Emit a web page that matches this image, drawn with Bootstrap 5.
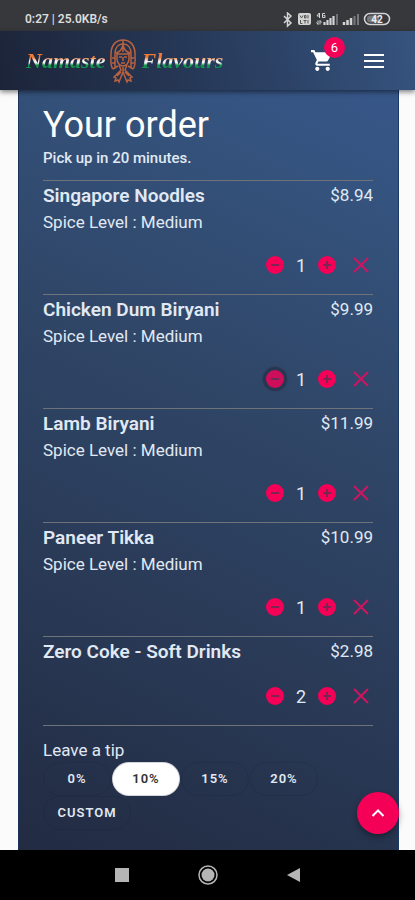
<!DOCTYPE html>
<html lang="en">
<head>
<meta charset="utf-8">
<meta name="viewport" content="width=device-width, initial-scale=1">
<title>Namaste Flavours - Your order</title>
<link href="https://cdn.jsdelivr.net/npm/bootstrap@5.3.0/dist/css/bootstrap.min.css" rel="stylesheet">
<style>
  body { font-family: Roboto, "Liberation Sans", sans-serif; background: #fbfbfb; color: #e0e9f3; }
  svg { display: block; }
  .statusbar { height: 31px; background: #37383c; color: #dcdcdc; font-size: 12px; font-weight: 600; padding: 12px 24px 0 25px; }
  .topbar { height: 59px; padding: 0 30px 0 26px; background: linear-gradient(75deg, #1c2438 0%, #263857 45%, #36547f 100%); box-shadow: 0 2px 5px rgba(0,0,0,.5); z-index: 2; }
  .brand-word { font: italic 700 22px/30px "Liberation Serif", serif; color: transparent; background: linear-gradient(#f07a35 38%, #f4f4f4 50%, #f4f4f4 56%, #12954d 64%); -webkit-background-clip: text; background-clip: text; }
  .icon-btn { border: 0; background: none; padding: 0; color: #fff; line-height: 1; }
  .cart-count { left: 14px; top: -11px; width: 21px; height: 21px; font-size: 13px; line-height: 21px; background: #f50057; color: #fff; }
  .order-panel { margin: 0 16px 0 18px; padding: 14px 25px 16px 24px; background: linear-gradient(205deg, #37578a 0%, #34527c 15%, #304769 38%, #2a3b58 66%, #222b42 100%); border-right: 1px solid #1b3a68; border-left: 1px solid #1b3358; }
  .order-title { font-size: 36px; line-height: 42px; font-weight: 400; color: #fff; }
  .pickup { font-size: 15px; line-height: 24px; font-weight: 500; margin-bottom: 10px; }
  .order-item { border-top: 1px solid #6e7379; padding-top: 1px; }
  .order-list { border-bottom: 1px solid #6e7379; margin-bottom: 12px; }
  .item-line { font-size: 17px; line-height: 27px; }
  .order-item:last-child .item-line { min-height: 29px; }
  .item-name { font-weight: 600; font-size: 19px; line-height: 27px; }
  .controls { height: 58px; gap: 2px; font-size: 18px; }
  .qty { width: 24px; }
  .ctl { width: 24px; height: 24px; border: 0; padding: 2px; background: none; border-radius: 50%; color: #f50057; }
  .ctl-on { background: #27334b; opacity: .8; box-shadow: 0 0 2px #27334b; }
  .ctl-x { color: #cf1460; }
  .tip-label { font-size: 17px; line-height: 24px; }
  .tips { column-gap: 1px; }
  .tip { width: 68px; height: 34px; padding: 0; border: 1px solid rgba(20,30,55,.18); border-radius: 17px; background: none; color: #e0e9f3; font-size: 13px; font-weight: 600; letter-spacing: 1px; }
  .tip-on { background: #fff; color: #333; }
  .tip-custom { width: 88px; }
  .to-top { right: 16px; bottom: 16px; width: 42px; height: 42px; border: 0; padding: 0; border-radius: 50%; background: #f50057; box-shadow: 0 3px 6px rgba(0,0,0,.35); }
  .sysnav { height: 50px; background: #000; padding: 0 79px; }
  .sysnav button { width: 86px; }
</style>
<script src="https://cdn.jsdelivr.net/npm/bootstrap@5.3.0/dist/js/bootstrap.bundle.min.js"></script>
</head>
<body>
<svg width="0" height="0" class="position-absolute" aria-hidden="true">
  <symbol id="minus" viewBox="0 0 20 20"><circle cx="10" cy="10" r="9" fill="currentColor"/><path d="M6 10h8" stroke="#7d2452" stroke-width="2"/></symbol>
  <symbol id="plus" viewBox="0 0 20 20"><circle cx="10" cy="10" r="9" fill="currentColor"/><path d="M6 10h8M10 6v8" stroke="#7d2452" stroke-width="2"/></symbol>
  <symbol id="cross" viewBox="0 0 20 20"><path d="M3 3l14 14M17 3L3 17" stroke="currentColor" stroke-width="2"/></symbol>
</svg>
<div class="d-flex flex-column min-vh-100">
  <div class="statusbar d-flex justify-content-between align-items-start lh-sm">
    <span>0:27 | 25.0KB/s</span>
    <svg width="108" height="16" viewBox="0 0 108 16" fill="none" stroke="#d4d4d4">
      <path d="M1 4l7 7-3.500 3V1L8 4l-7 7" stroke-width="1.500"/>
      <rect x="15" y="1" width="13" height="12" rx="2" fill="#d4d4d4" stroke="none"/>
      <path d="M17 3.500l1.500 2.500L20 3.500M21.500 3.500h1.500v2.500h-1.500zM25 3v3.500M17.500 8v3.500h2M20.500 8.500h3M22 8.500v3M25 8v3.500" stroke="#555" stroke-width="1"/>
      <path d="M36 1l-2 3h3M36.500 1v5M42 1.500h-2.500v4H42V3.500h-1.500M35 8.500v4l-1.500-2M37 12.500v-4l1.500 2" stroke-width="1"/>
      <path d="M41.500 13v-3M44.500 13V8M47.500 13V6M50.500 13V4" stroke-width="2.200"/>
      <path d="M54 13V2" stroke="#707174" stroke-width="2"/>
      <path d="M61 13v-3M64.500 13V8M68 13V6" stroke-width="2.500"/>
      <path d="M71.500 13V4M75 13V2" stroke="#77787a" stroke-width="2"/>
      <rect x="81.500" y="1.500" width="25" height="11" rx="5.500" stroke-width="1.500"/>
      <rect x="84" y="3.500" width="12" height="7" rx="3" fill="#77787a" stroke="none"/>
      <text x="94" y="11" text-anchor="middle" font-size="10" font-weight="700" fill="#eee" stroke="none">42</text>
    </svg>
  </div>

  <nav class="topbar d-flex align-items-center justify-content-between position-relative">
    <a href="#" class="d-flex align-items-center text-decoration-none gap-1" aria-label="Namaste Flavours home">
      <span class="brand-word">Namaste</span>
      <svg width="28" height="46" viewBox="0 0 28 46" fill="none" stroke="#b9623f" stroke-width="1.500">
        <path d="M4 31C1 28 2 23 2 16 2 7 7 2 14 2s12 5 12 14c0 7 1 12-2 15"/>
        <path d="M6 29V16c0-6 3-10 8-10s8 4 8 10v13"/>
        <path d="M7 15c4-1 6-4 7-8 1 4 3 7 7 8M14 2v12M8 16h12v5c0 4-3 7-6 7s-6-3-6-7z"/>
        <path d="M10 19h3M15 19h3M14 19v4M12 25h4M3 20h3M22 20h3M3 25h3M22 25h3M4 31l5-3M24 31l-5-3"/>
        <path d="M10 27l2 5-7 7 2 1-1 3 3-1 1 2 4-10 4 10 1-2 3 1-1-3 2-1-7-7 2-5M14 29v6M8 38l4-4M20 38l-4-4"/>
      </svg>
      <span class="brand-word">Flavours</span>
    </a>
    <div class="d-flex align-items-center gap-4">
      <button class="icon-btn position-relative me-1" type="button" aria-label="Cart, 6 items">
        <svg width="25" height="25" viewBox="0 0 24 24" fill="currentColor"><path d="M7 18c-1.100 0-1.990.9-1.990 2S5.900 22 7 22s2-.9 2-2-.9-2-2-2zM1 2v2h2l3.600 7.590-1.350 2.450C4.520 15.370 5.480 17 7 17h12v-2H7.420c-.14 0-.25-.11-.25-.25l.03-.12.900-1.630h7.450c.75 0 1.410-.41 1.750-1.030L21.700 4H5.210l-.94-2H1zm16 16c-1.100 0-1.990.9-1.990 2s.89 2 1.990 2 2-.9 2-2-.9-2-2-2z"/></svg>
        <span class="cart-count position-absolute rounded-circle text-center">6</span>
      </button>
      <button class="icon-btn" type="button" aria-label="Menu">
        <svg width="22" height="18" viewBox="0 0 22 18" stroke="currentColor" stroke-width="2"><path d="M1 3h20M1 9h20M1 15h20"/></svg>
      </button>
    </div>
  </nav>

  <main class="flex-grow-1 position-relative d-flex flex-column">
    <section class="order-panel flex-grow-1">
      <h1 class="order-title mb-0">Your order</h1>
      <p class="pickup">Pick up in 20 minutes.</p>
      <ul class="order-list list-unstyled">
        <li class="order-item">
          <div class="d-flex justify-content-between item-line"><span class="item-name">Singapore Noodles</span><span>$8.94</span></div>
          <div class="item-line">Spice Level : Medium</div>
          <div class="controls d-flex align-items-center justify-content-end">
            <button class="ctl" type="button" aria-label="Remove one"><svg width="20" height="20"><use href="#minus"/></svg></button>
            <span class="qty text-center">1</span>
            <button class="ctl" type="button" aria-label="Add one"><svg width="20" height="20"><use href="#plus"/></svg></button>
            <button class="ctl ctl-x ms-2" type="button" aria-label="Delete"><svg width="20" height="20"><use href="#cross"/></svg></button>
          </div>
        </li>
        <li class="order-item">
          <div class="d-flex justify-content-between item-line"><span class="item-name">Chicken Dum Biryani</span><span>$9.99</span></div>
          <div class="item-line">Spice Level : Medium</div>
          <div class="controls d-flex align-items-center justify-content-end">
            <button class="ctl ctl-on" type="button" aria-label="Remove one"><svg width="20" height="20"><use href="#minus"/></svg></button>
            <span class="qty text-center">1</span>
            <button class="ctl" type="button" aria-label="Add one"><svg width="20" height="20"><use href="#plus"/></svg></button>
            <button class="ctl ctl-x ms-2" type="button" aria-label="Delete"><svg width="20" height="20"><use href="#cross"/></svg></button>
          </div>
        </li>
        <li class="order-item">
          <div class="d-flex justify-content-between item-line"><span class="item-name">Lamb Biryani</span><span>$11.99</span></div>
          <div class="item-line">Spice Level : Medium</div>
          <div class="controls d-flex align-items-center justify-content-end">
            <button class="ctl" type="button" aria-label="Remove one"><svg width="20" height="20"><use href="#minus"/></svg></button>
            <span class="qty text-center">1</span>
            <button class="ctl" type="button" aria-label="Add one"><svg width="20" height="20"><use href="#plus"/></svg></button>
            <button class="ctl ctl-x ms-2" type="button" aria-label="Delete"><svg width="20" height="20"><use href="#cross"/></svg></button>
          </div>
        </li>
        <li class="order-item">
          <div class="d-flex justify-content-between item-line"><span class="item-name">Paneer Tikka</span><span>$10.99</span></div>
          <div class="item-line">Spice Level : Medium</div>
          <div class="controls d-flex align-items-center justify-content-end">
            <button class="ctl" type="button" aria-label="Remove one"><svg width="20" height="20"><use href="#minus"/></svg></button>
            <span class="qty text-center">1</span>
            <button class="ctl" type="button" aria-label="Add one"><svg width="20" height="20"><use href="#plus"/></svg></button>
            <button class="ctl ctl-x ms-2" type="button" aria-label="Delete"><svg width="20" height="20"><use href="#cross"/></svg></button>
          </div>
        </li>
        <li class="order-item">
          <div class="d-flex justify-content-between item-line"><span class="item-name">Zero Coke - Soft Drinks</span><span>$2.98</span></div>
          <div class="controls d-flex align-items-center justify-content-end">
            <button class="ctl" type="button" aria-label="Remove one"><svg width="20" height="20"><use href="#minus"/></svg></button>
            <span class="qty text-center">2</span>
            <button class="ctl" type="button" aria-label="Add one"><svg width="20" height="20"><use href="#plus"/></svg></button>
            <button class="ctl ctl-x ms-2" type="button" aria-label="Delete"><svg width="20" height="20"><use href="#cross"/></svg></button>
          </div>
        </li>
      </ul>
      <div class="tip-label" id="tip-label">Leave a tip</div>
      <div class="tips d-flex flex-wrap" role="group" aria-labelledby="tip-label">
        <button class="tip" type="button">0%</button>
        <button class="tip tip-on" type="button" aria-pressed="true">10%</button>
        <button class="tip" type="button">15%</button>
        <button class="tip" type="button">20%</button>
        <button class="tip tip-custom" type="button">CUSTOM</button>
      </div>
    </section>
    <button class="to-top position-absolute d-flex align-items-center justify-content-center" type="button" aria-label="Back to top">
      <svg width="14" height="10" viewBox="0 0 14 10" fill="none" stroke="#fff" stroke-width="2"><path d="M1.500 8L7 2.500 12.500 8"/></svg>
    </button>
  </main>

  <footer class="sysnav d-flex justify-content-between align-items-center">
    <button class="icon-btn d-flex justify-content-center" type="button" aria-label="Recent apps"><svg width="14" height="14"><rect width="14" height="14" fill="#b5b5b5"/></svg></button>
    <button class="icon-btn d-flex justify-content-center" type="button" aria-label="Home"><svg width="20" height="20" viewBox="0 0 20 20"><circle cx="10" cy="10" r="9" fill="none" stroke="#b5b5b5" stroke-width="1.500"/><circle cx="10" cy="10" r="6.500" fill="#b5b5b5"/></svg></button>
    <button class="icon-btn d-flex justify-content-center" type="button" aria-label="Back"><svg width="13" height="14"><path d="M13 0v14L0 7z" fill="#b5b5b5"/></svg></button>
  </footer>
</div>
</body>
</html>
